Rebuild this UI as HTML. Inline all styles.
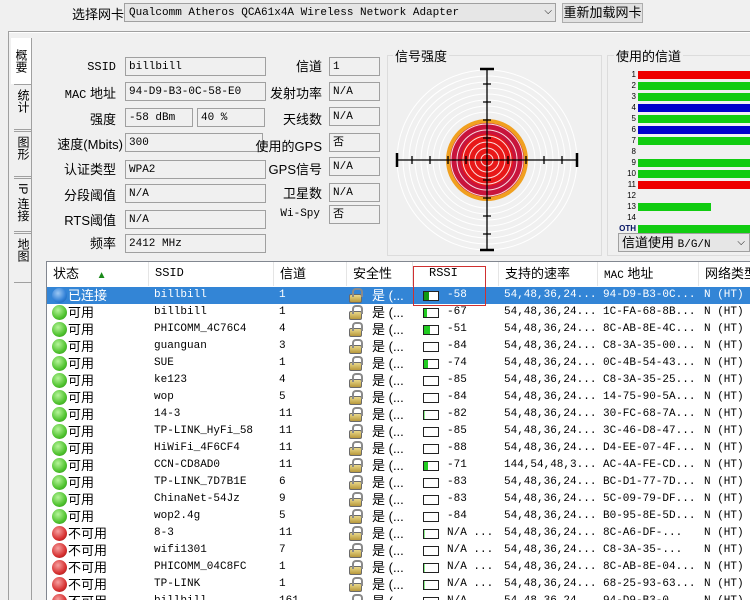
<!DOCTYPE html>
<html><head><meta charset="utf-8">
<style>
*{margin:0;padding:0;box-sizing:border-box}
body{width:750px;height:600px;overflow:hidden;background:#f0f0f0;font-family:"Liberation Sans","Noto Sans CJK SC",sans-serif;font-size:13px;color:#000;position:relative}
.a{position:absolute;white-space:nowrap}
.f{position:absolute;background:#f0f0f0;border:1px solid #a0a0a0;font-family:"Liberation Mono","Noto Sans CJK SC",monospace;font-size:11px;padding:2px 3px;height:19px;line-height:14px}
.l{position:absolute;text-align:right;font-size:13px;white-space:nowrap}
.m{font-family:"Liberation Mono","Noto Sans CJK SC",monospace;font-size:11px}
#tbl{position:absolute;left:46px;top:261px;width:704px;height:339px;background:#fff;border-left:1px solid #828790;border-top:1px solid #828790;overflow:hidden}
.hd{position:absolute;top:0;height:24px;line-height:23px;font-size:13px;border-right:1px solid #e5e5e5;padding-left:6px;background:#fff}
.r{position:absolute;left:0;width:704px;height:17px;line-height:17px;font-size:13px}
.r span{position:absolute;top:0;white-space:nowrap}
.sel{background:#3385d6;color:#fff}
.dot{width:15px;height:15px;border-radius:50%;top:1px!important;left:5px}
.g{background:radial-gradient(circle at 40% 35%,#b6f59a,#4fc22e 60%,#2c8a18)}
.rd{background:radial-gradient(circle at 40% 35%,#f7a0a0,#d63030 60%,#8c1010)}
.bl{background:radial-gradient(circle at 40% 35%,#9cc8f4,#2f7fd6 60%,#1a5aa0)}
.lk{left:302px;width:13px;height:9px;top:7px!important;background:linear-gradient(#ead98a,#b8993c);border:1px solid #6a6a6a;border-radius:2px}
.lk::before{content:"";position:absolute;left:2px;top:-7px;width:7px;height:7px;border:2px solid #8a8a8a;border-bottom:none;border-radius:4px 4px 0 0}
.bar{left:376px;width:16px;height:10px;top:4px!important;border:1px solid #222;background:#fff}
.bar i{display:block;height:100%;background:#22cc22}
</style></head><body>
<div class="a" style="left:72px;top:4px">选择网卡</div>
<div class="a m" style="left:124px;top:3px;width:432px;height:19px;border:1px solid #a0a0a0;background:#e6e6e6;padding:2px 4px;font-size:11px;line-height:14px">Qualcomm Atheros QCA61x4A Wireless Network Adapter<span style="position:absolute;right:3px;top:1px;font-family:'Liberation Sans';font-size:10px">⌵</span></div>
<div class="a" style="left:562px;top:3px;width:81px;height:20px;border:1px solid #adadad;background:#e1e1e1;text-align:center;line-height:18px">重新加载网卡</div>
<div class="a" style="left:8px;top:31px;width:742px;height:2px;border-top:1px solid #a0a0a0;border-bottom:1px solid #fff"></div>
<div class="a" style="left:8px;top:31px;width:2px;height:569px;border-left:1px solid #a0a0a0"></div>
<div class="a" style="left:11px;top:38px;width:20px;height:46px;font-size:12px;writing-mode:vertical-rl;text-align:center;line-height:20px;background:#fff">概要</div>
<div class="a" style="left:14px;top:84px;width:18px;height:46px;border:1px solid #a0a0a0;border-left:none;font-size:12px;writing-mode:vertical-rl;line-height:16px;padding-top:4px">统计</div>
<div class="a" style="left:14px;top:131px;width:18px;height:46px;border:1px solid #a0a0a0;border-left:none;font-size:12px;writing-mode:vertical-rl;line-height:16px;padding-top:4px">图形</div>
<div class="a" style="left:14px;top:178px;width:18px;height:54px;border:1px solid #a0a0a0;border-left:none;font-size:12px;writing-mode:vertical-rl;line-height:16px;padding-top:4px">IP 连接</div>
<div class="a" style="left:14px;top:233px;width:18px;height:50px;border:1px solid #a0a0a0;border-left:none;font-size:12px;writing-mode:vertical-rl;line-height:16px;padding-top:4px">地图</div>
<div class="a" style="left:31px;top:38px;width:1px;height:562px;background:#a0a0a0"></div>
<div class="l m" style="left:40px;width:76px;top:60px;font-size:12px">SSID</div><div class="f" style="left:125px;top:57px;width:141px">billbill</div>
<div class="l" style="left:40px;width:76px;top:83px"><span class="m" style="font-size:12px">MAC</span> 地址</div><div class="f" style="left:125px;top:82px;width:141px">94-D9-B3-0C-58-E0</div>
<div class="l" style="left:40px;width:76px;top:109px">强度</div><div class="f" style="left:125px;top:108px;width:68px">-58 dBm</div><div class="f" style="left:197px;top:108px;width:68px">40 %</div>
<div class="l" style="left:40px;width:83px;top:134px">速度(Mbits)</div><div class="f" style="left:125px;top:133px;width:138px">300</div>
<div class="l" style="left:40px;width:76px;top:159px">认证类型</div><div class="f" style="left:125px;top:160px;width:141px">WPA2</div>
<div class="l" style="left:40px;width:76px;top:185px">分段阈值</div><div class="f" style="left:125px;top:184px;width:141px">N/A</div>
<div class="l" style="left:40px;width:76px;top:210px">RTS阈值</div><div class="f" style="left:125px;top:210px;width:141px">N/A</div>
<div class="l" style="left:40px;width:76px;top:233px">频率</div><div class="f" style="left:125px;top:234px;width:141px">2412 MHz</div>
<div class="l" style="left:260px;width:62px;top:56px">信道</div><div class="f" style="left:329px;top:57px;width:51px">1</div>
<div class="l" style="left:260px;width:62px;top:83px">发射功率</div><div class="f" style="left:329px;top:82px;width:51px">N/A</div>
<div class="l" style="left:260px;width:62px;top:109px">天线数</div><div class="f" style="left:329px;top:107px;width:51px">N/A</div>
<div class="l" style="left:255px;width:67px;top:136px">使用的GPS</div><div class="f" style="left:329px;top:133px;width:51px">否</div>
<div class="l" style="left:260px;width:62px;top:159px">GPS信号</div><div class="f" style="left:329px;top:157px;width:51px">N/A</div>
<div class="l" style="left:260px;width:62px;top:183px">卫星数</div><div class="f" style="left:329px;top:183px;width:51px">N/A</div>
<div class="l m" style="left:260px;width:60px;top:208px">Wi-Spy</div><div class="f" style="left:329px;top:205px;width:51px">否</div>
<div class="a" style="left:387px;top:55px;width:215px;height:201px;border:1px solid #dcdcdc"></div>
<div class="a" style="left:393px;top:46px;background:#f0f0f0;padding:0 2px">信号强度</div>
<svg class="a" style="left:387px;top:55px" width="215" height="201" viewBox="387 55 215 201">
<g fill="none" stroke="#fff" stroke-width="1">
<circle cx="487" cy="160" r="90"/><circle cx="487" cy="160" r="84"/><circle cx="487" cy="160" r="78"/><circle cx="487" cy="160" r="72"/><circle cx="487" cy="160" r="66"/><circle cx="487" cy="160" r="60"/><circle cx="487" cy="160" r="54"/><circle cx="487" cy="160" r="48"/></g>
<circle cx="487" cy="160" r="41" fill="#f0a020"/>
<circle cx="487" cy="160" r="37" fill="#c8143c"/>
<circle cx="487" cy="160" r="26" fill="#e81818"/>
<g fill="none" stroke="#fff" stroke-width="1" opacity=".85">
<circle cx="487" cy="160" r="36"/><circle cx="487" cy="160" r="30"/><circle cx="487" cy="160" r="24"/><circle cx="487" cy="160" r="18"/><circle cx="487" cy="160" r="12"/><circle cx="487" cy="160" r="6"/></g>
<g stroke="#000" stroke-width="1.3">
<line x1="397" y1="160" x2="577" y2="160"/><line x1="487" y1="69" x2="487" y2="250"/>
<line x1="397" y1="153" x2="397" y2="167" stroke-width="2.5"/><line x1="577" y1="153" x2="577" y2="167" stroke-width="2.5"/>
<line x1="480" y1="69" x2="494" y2="69" stroke-width="2.5"/><line x1="480" y1="250" x2="494" y2="250" stroke-width="2.5"/>
<path d="M412 156v8M430 156v8M448 156v8M466 156v8M508 156v8M526 156v8M544 156v8M562 156v8M483 84h8M483 102h8M483 120h8M483 138h8M483 180h8M483 198h8M483 216h8M483 234h8"/>
</g></svg>
<div class="a" style="left:607px;top:55px;width:150px;height:201px;border:1px solid #dcdcdc"></div>
<div class="a" style="left:614px;top:46px;background:#f0f0f0;padding:0 2px">使用的信道</div>
<div class="a" style="left:600px;top:69px;font-size:8px;line-height:11px;text-align:right;width:36px;font-family:'Liberation Sans',sans-serif">1<br>2<br>3<br>4<br>5<br>6<br>7<br>8<br>9<br>10<br>11<br>12<br>13<br>14<br><b style="color:#001060">OTH</b></div>
<div class="a" style="left:638px;top:71px;width:112px;height:8px;background:#e00"></div>
<div class="a" style="left:638px;top:82px;width:112px;height:8px;background:#1c1"></div>
<div class="a" style="left:638px;top:93px;width:112px;height:8px;background:#1c1"></div>
<div class="a" style="left:638px;top:104px;width:112px;height:8px;background:#00c"></div>
<div class="a" style="left:638px;top:115px;width:112px;height:8px;background:#1c1"></div>
<div class="a" style="left:638px;top:126px;width:112px;height:8px;background:#00c"></div>
<div class="a" style="left:638px;top:137px;width:112px;height:8px;background:#1c1"></div>
<div class="a" style="left:638px;top:159px;width:112px;height:8px;background:#1c1"></div>
<div class="a" style="left:638px;top:170px;width:112px;height:8px;background:#1c1"></div>
<div class="a" style="left:638px;top:181px;width:112px;height:8px;background:#e00"></div>
<div class="a" style="left:638px;top:203px;width:73px;height:8px;background:#1c1"></div>
<div class="a" style="left:638px;top:225px;width:112px;height:8px;background:#1c1"></div>
<div class="a" style="left:618px;top:233px;width:132px;height:19px;border:1px solid #a0a0a0;background:#e6e6e6;padding-left:3px;line-height:17px">信道使用 <span class="m">B/G/N</span><span style="position:absolute;right:4px;font-size:10px">⌵</span></div>
<div id="tbl">
<div class="hd" style="left:0;width:102px">状态 <span style="color:#1a8a1a;font-size:10px;margin-left:14px">▲</span></div>
<div class="hd m" style="left:102px;width:125px;font-size:12px">SSID</div>
<div class="hd" style="left:227px;width:73px">信道</div>
<div class="hd" style="left:300px;width:66px">安全性</div>
<div class="hd m" style="left:366px;width:86px;padding-left:16px;font-size:12px">RSSI</div>
<div class="hd" style="left:452px;width:99px">支持的速率</div>
<div class="hd" style="left:551px;width:101px"><span class="m">MAC</span> 地址</div>
<div class="hd" style="left:652px;width:60px">网络类型</div>

<div class="r sel" style="top:25px"><span class="dot bl"></span><span style="left:21px">已连接</span><span class="m" style="left:107px">billbill</span><span class="m" style="left:232px">1</span><span class="lk"></span><span style="left:325px">是 (...</span><span class="bar"><i style="width:35%;background:#119911"></i></span><span class="m" style="left:400px">-58</span><span class="m" style="left:457px">54,48,36,24...</span><span class="m" style="left:556px">94-D9-B3-0C...</span><span class="m" style="left:657px">N (HT)</span></div>
<div class="r" style="top:42px"><span class="dot g"></span><span style="left:21px">可用</span><span class="m" style="left:107px">billbill</span><span class="m" style="left:232px">1</span><span class="lk"></span><span style="left:325px">是 (...</span><span class="bar"><i style="width:20%"></i></span><span class="m" style="left:400px">-67</span><span class="m" style="left:457px">54,48,36,24...</span><span class="m" style="left:556px">1C-FA-68-8B...</span><span class="m" style="left:657px">N (HT)</span></div>
<div class="r" style="top:59px"><span class="dot g"></span><span style="left:21px">可用</span><span class="m" style="left:107px">PHICOMM_4C76C4</span><span class="m" style="left:232px">4</span><span class="lk"></span><span style="left:325px">是 (...</span><span class="bar"><i style="width:45%"></i></span><span class="m" style="left:400px">-51</span><span class="m" style="left:457px">54,48,36,24...</span><span class="m" style="left:556px">8C-AB-8E-4C...</span><span class="m" style="left:657px">N (HT)</span></div>
<div class="r" style="top:76px"><span class="dot g"></span><span style="left:21px">可用</span><span class="m" style="left:107px">guanguan</span><span class="m" style="left:232px">3</span><span class="lk"></span><span style="left:325px">是 (...</span><span class="bar"></span><span class="m" style="left:400px">-84</span><span class="m" style="left:457px">54,48,36,24...</span><span class="m" style="left:556px">C8-3A-35-00...</span><span class="m" style="left:657px">N (HT)</span></div>
<div class="r" style="top:93px"><span class="dot g"></span><span style="left:21px">可用</span><span class="m" style="left:107px">SUE</span><span class="m" style="left:232px">1</span><span class="lk"></span><span style="left:325px">是 (...</span><span class="bar"><i style="width:25%"></i></span><span class="m" style="left:400px">-74</span><span class="m" style="left:457px">54,48,36,24...</span><span class="m" style="left:556px">0C-4B-54-43...</span><span class="m" style="left:657px">N (HT)</span></div>
<div class="r" style="top:110px"><span class="dot g"></span><span style="left:21px">可用</span><span class="m" style="left:107px">ke123</span><span class="m" style="left:232px">4</span><span class="lk"></span><span style="left:325px">是 (...</span><span class="bar"></span><span class="m" style="left:400px">-85</span><span class="m" style="left:457px">54,48,36,24...</span><span class="m" style="left:556px">C8-3A-35-25...</span><span class="m" style="left:657px">N (HT)</span></div>
<div class="r" style="top:127px"><span class="dot g"></span><span style="left:21px">可用</span><span class="m" style="left:107px">wop</span><span class="m" style="left:232px">5</span><span class="lk"></span><span style="left:325px">是 (...</span><span class="bar"></span><span class="m" style="left:400px">-84</span><span class="m" style="left:457px">54,48,36,24...</span><span class="m" style="left:556px">14-75-90-5A...</span><span class="m" style="left:657px">N (HT)</span></div>
<div class="r" style="top:144px"><span class="dot g"></span><span style="left:21px">可用</span><span class="m" style="left:107px">14-3</span><span class="m" style="left:232px">11</span><span class="lk"></span><span style="left:325px">是 (...</span><span class="bar"><i style="width:10%;background:#8e8"></i></span><span class="m" style="left:400px">-82</span><span class="m" style="left:457px">54,48,36,24...</span><span class="m" style="left:556px">30-FC-68-7A...</span><span class="m" style="left:657px">N (HT)</span></div>
<div class="r" style="top:161px"><span class="dot g"></span><span style="left:21px">可用</span><span class="m" style="left:107px">TP-LINK_HyFi_58</span><span class="m" style="left:232px">11</span><span class="lk"></span><span style="left:325px">是 (...</span><span class="bar"></span><span class="m" style="left:400px">-85</span><span class="m" style="left:457px">54,48,36,24...</span><span class="m" style="left:556px">3C-46-D8-47...</span><span class="m" style="left:657px">N (HT)</span></div>
<div class="r" style="top:178px"><span class="dot g"></span><span style="left:21px">可用</span><span class="m" style="left:107px">HiWiFi_4F6CF4</span><span class="m" style="left:232px">11</span><span class="lk"></span><span style="left:325px">是 (...</span><span class="bar"></span><span class="m" style="left:400px">-88</span><span class="m" style="left:457px">54,48,36,24...</span><span class="m" style="left:556px">D4-EE-07-4F...</span><span class="m" style="left:657px">N (HT)</span></div>
<div class="r" style="top:195px"><span class="dot g"></span><span style="left:21px">可用</span><span class="m" style="left:107px">CCN-CD8AD0</span><span class="m" style="left:232px">11</span><span class="lk"></span><span style="left:325px">是 (...</span><span class="bar"><i style="width:25%"></i></span><span class="m" style="left:400px">-71</span><span class="m" style="left:457px">144,54,48,3...</span><span class="m" style="left:556px">AC-4A-FE-CD...</span><span class="m" style="left:657px">N (HT)</span></div>
<div class="r" style="top:212px"><span class="dot g"></span><span style="left:21px">可用</span><span class="m" style="left:107px">TP-LINK_7D7B1E</span><span class="m" style="left:232px">6</span><span class="lk"></span><span style="left:325px">是 (...</span><span class="bar"></span><span class="m" style="left:400px">-83</span><span class="m" style="left:457px">54,48,36,24...</span><span class="m" style="left:556px">BC-D1-77-7D...</span><span class="m" style="left:657px">N (HT)</span></div>
<div class="r" style="top:229px"><span class="dot g"></span><span style="left:21px">可用</span><span class="m" style="left:107px">ChinaNet-54Jz</span><span class="m" style="left:232px">9</span><span class="lk"></span><span style="left:325px">是 (...</span><span class="bar"></span><span class="m" style="left:400px">-83</span><span class="m" style="left:457px">54,48,36,24...</span><span class="m" style="left:556px">5C-09-79-DF...</span><span class="m" style="left:657px">N (HT)</span></div>
<div class="r" style="top:246px"><span class="dot g"></span><span style="left:21px">可用</span><span class="m" style="left:107px">wop2.4g</span><span class="m" style="left:232px">5</span><span class="lk"></span><span style="left:325px">是 (...</span><span class="bar"></span><span class="m" style="left:400px">-84</span><span class="m" style="left:457px">54,48,36,24...</span><span class="m" style="left:556px">B0-95-8E-5D...</span><span class="m" style="left:657px">N (HT)</span></div>
<div class="r" style="top:263px"><span class="dot rd"></span><span style="left:21px">不可用</span><span class="m" style="left:107px">8-3</span><span class="m" style="left:232px">11</span><span class="lk"></span><span style="left:325px">是 (...</span><span class="bar"><i style="width:8%;background:#8e8"></i></span><span class="m" style="left:400px">N/A ...</span><span class="m" style="left:457px">54,48,36,24...</span><span class="m" style="left:556px">8C-A6-DF-...</span><span class="m" style="left:657px">N (HT)</span></div>
<div class="r" style="top:280px"><span class="dot rd"></span><span style="left:21px">不可用</span><span class="m" style="left:107px">wifi1301</span><span class="m" style="left:232px">7</span><span class="lk"></span><span style="left:325px">是 (...</span><span class="bar"></span><span class="m" style="left:400px">N/A ...</span><span class="m" style="left:457px">54,48,36,24...</span><span class="m" style="left:556px">C8-3A-35-...</span><span class="m" style="left:657px">N (HT)</span></div>
<div class="r" style="top:297px"><span class="dot rd"></span><span style="left:21px">不可用</span><span class="m" style="left:107px">PHICOMM_04C8FC</span><span class="m" style="left:232px">1</span><span class="lk"></span><span style="left:325px">是 (...</span><span class="bar"><i style="width:8%;background:#8e8"></i></span><span class="m" style="left:400px">N/A ...</span><span class="m" style="left:457px">54,48,36,24...</span><span class="m" style="left:556px">8C-AB-8E-04...</span><span class="m" style="left:657px">N (HT)</span></div>
<div class="r" style="top:314px"><span class="dot rd"></span><span style="left:21px">不可用</span><span class="m" style="left:107px">TP-LINK</span><span class="m" style="left:232px">1</span><span class="lk"></span><span style="left:325px">是 (...</span><span class="bar"><i style="width:8%;background:#8e8"></i></span><span class="m" style="left:400px">N/A ...</span><span class="m" style="left:457px">54,48,36,24...</span><span class="m" style="left:556px">68-25-93-63...</span><span class="m" style="left:657px">N (HT)</span></div>
<div class="r" style="top:331px"><span class="dot rd"></span><span style="left:21px">不可用</span><span class="m" style="left:107px">billbill</span><span class="m" style="left:232px">161</span><span class="lk"></span><span style="left:325px">是 (...</span><span class="bar"></span><span class="m" style="left:400px">N/A ...</span><span class="m" style="left:457px">54,48,36,24...</span><span class="m" style="left:556px">94-D9-B3-0...</span><span class="m" style="left:657px">N (HT)</span></div>
<div class="a" style="left:366px;top:4px;width:73px;height:40px;border:1px solid #d03030"></div>
</div>
</body></html>
